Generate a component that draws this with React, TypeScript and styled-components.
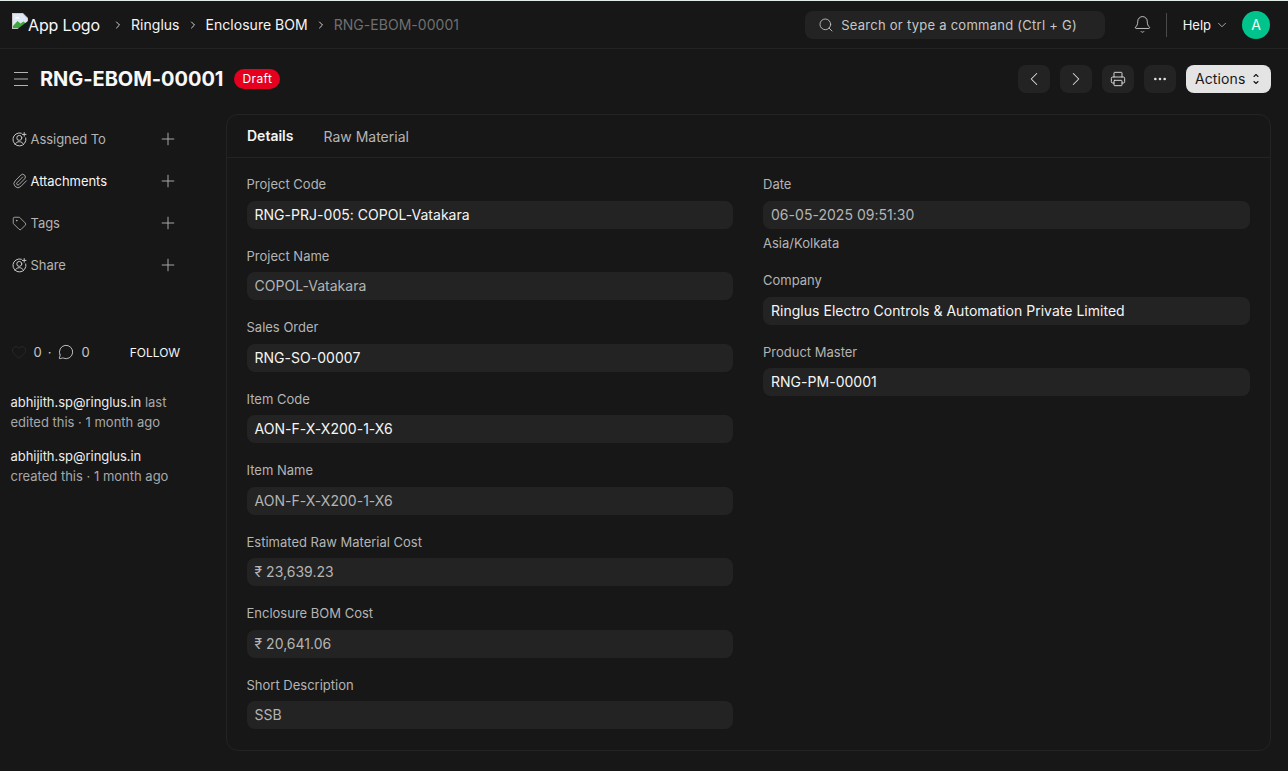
import React from 'react';
import styled, {createGlobalStyle} from 'styled-components';
import {Bell, ChevronDown, ChevronLeft, ChevronRight, Ellipsis, Heart, MessageCircle, Paperclip, Plus, Printer, Search, Tag} from 'lucide-react';

const GlobalStyle = createGlobalStyle`
  html, body {
    margin: 0;
    background: #171717;
    color: #f8f8f8;
    font-family: Inter, "Noto Sans", sans-serif;
    font-size: 14px;
  }
  * { box-sizing: border-box; }
`;

const Page = styled.div`
  height: 771px;
  overflow: hidden;
  border-top: 1px solid #e2ece6;
`;

const Navbar = styled.header`
  display: flex;
  align-items: center;
  height: 48px;
  padding: 0 18px 0 12px;
  border-bottom: 1px solid #232323;
`;

const Logo = styled.div`
  display: flex;
  align-items: flex-start;
  width: 93px;
  height: 24px;
  font-size: 16px;
  line-height: 25px;
  letter-spacing: -0.15px;
  white-space: nowrap;
  color: #f8f8f8;
`;

const BrokenImage = styled.svg`
  flex: none;
  width: 16px;
  height: 16px;
`;

const Crumbs = styled.nav`
  display: flex;
  align-items: center;
  flex: 1;
  font-size: 14px;
  color: #f8f8f8;
`;

const CrumbSep = styled(ChevronRight)`
  width: 12px;
  height: 12px;
  margin: 0 7px;
  color: #e8e8e8;
`;

const Crumb = styled.span<{$current?: boolean}>`
  letter-spacing: 0.03px;
  color: ${props => (props.$current ? '#6f6f6f' : '#f5f5f5')};
`;

const SearchBox = styled.div`
  display: flex;
  align-items: center;
  gap: 7.5px;
  width: 300px;
  height: 28px;
  padding: 0 13px;
  border-radius: 8px;
  background: #232323;
  color: #c7c7c7;
  font-size: 13px;
  letter-spacing: 0.26px;
  margin-right: 28px;
`;

const BellButton = styled.span`
  display: flex;
  color: #d8d8d8;
`;

const NavDivider = styled.span`
  width: 1px;
  height: 24px;
  margin: 0 16px 0 14px;
  background: #4a4a4a;
`;

const Help = styled.span`
  display: flex;
  align-items: center;
  gap: 4px;
  font-size: 13px;
  color: #f5f5f5;
  margin-right: 13px;
`;

const Avatar = styled.span`
  display: flex;
  align-items: center;
  justify-content: center;
  width: 28px;
  height: 28px;
  border-radius: 50%;
  background: #00c48c;
  color: #e8fff6;
  font-size: 14px;
`;

const PageHead = styled.div`
  display: flex;
  align-items: center;
  height: 65px;
  padding: 0 17px 5px 14px;
`;

const MenuIcon = styled.svg`
  flex: none;
  width: 14px;
  height: 16px;
  margin-right: 12px;
  color: #b4b4b4;
`;

const Title = styled.h1`
  margin: 0 11px 0 0;
  font-size: 20px;
  font-weight: 700;
  line-height: 28px;
  letter-spacing: -0.05px;
  color: #f8f8f8;
`;

const Badge = styled.span`
  height: 20px;
  padding: 0 8px;
  border-radius: 10px;
  background: #e6001f;
  color: #fff;
  font-size: 12px;
  line-height: 20px;
  letter-spacing: 0.4px;
`;

const HeadActions = styled.div`
  display: flex;
  align-items: center;
  gap: 10px;
  margin-left: auto;
`;

const IconButton = styled.button`
  display: flex;
  align-items: center;
  justify-content: center;
  width: 32px;
  height: 28px;
  padding: 0;
  border: 0;
  border-radius: 8px;
  background: #232323;
  color: #e0e0e0;
`;

const ActionsButton = styled.button`
  display: flex;
  align-items: center;
  gap: 8px;
  width: 85px;
  height: 28px;
  padding: 0 0 1px 9px;
  border: 0;
  border-radius: 8px;
  background: #e4e4e4;
  color: #171717;
  font-family: inherit;
  font-size: 14px;
  letter-spacing: 0.1px;
`;

const UpDownIcon = styled.svg`
  flex: none;
  width: 6px;
  height: 12px;
`;

const Layout = styled.main`
  display: flex;
  align-items: flex-start;
`;

const Sidebar = styled.aside`
  width: 226px;
  flex: none;
  padding: 4px 10.5px 0;
`;

const SideRow = styled.div<{$active?: boolean}>`
  display: flex;
  align-items: center;
  height: 42px;
  padding-right: 37.5px;
  font-size: 13px;
  color: ${props => (props.$active ? '#f5f5f5' : '#b4b4b4')};
`;

const SideLabel = styled.span`
  flex: 1;
  margin-left: 3px;
  letter-spacing: -0.05px;
`;

const SideIcon = styled.span`
  display: flex;
  justify-content: center;
  width: 16px;
  margin-left: 1px;
  color: #c7c7c7;
`;

const PersonIcon = styled.svg`
  width: 15px;
  height: 15px;
`;

const PlusIcon = styled(Plus)`
  width: 20px;
  height: 20px;
  color: #b4b4b4;
`;

const Stats = styled.div`
  display: flex;
  align-items: center;
  margin-top: 56px;
  height: 20px;
  font-size: 13px;
  color: #c7c7c7;
`;

const Count = styled.span`
  margin-left: 7px;
`;

const Dot = styled.span`
  margin: 0 7px 0 6px;
`;

const Follow = styled.span`
  margin-left: 40px;
  font-size: 12px;
  color: #f5f5f5;
`;

const Activity = styled.div`
  margin-top: 30px;
  font-size: 13px;
  line-height: 20px;
  color: #a8a8a8;
  & + & {
    margin-top: 14px;
  }
`;

const Owner = styled.span`
  letter-spacing: -0.04px;
  color: #ededed;
`;

const Card = styled.section`
  width: 1045px;
  height: 637px;
  border: 1px solid #232323;
  border-radius: 12px;
`;

const Tabs = styled.div`
  display: flex;
  gap: 30px;
  height: 43px;
  padding: 0 20px;
  border-bottom: 1px solid #232323;
`;

const TabItem = styled.span<{$active?: boolean}>`
  font-size: 14px;
  line-height: ${props => (props.$active ? 42 : 43)}px;
  font-weight: ${props => (props.$active ? 600 : 400)};
  color: ${props => (props.$active ? '#f5f5f5' : '#b4b4b4')};
`;

const FormGrid = styled.div`
  display: grid;
  grid-template-columns: 486.5px 486.5px;
  column-gap: 30px;
  padding: 16.6px 19.5px 0;
`;

const Column = styled.div`
  display: flex;
  flex-direction: column;
`;

const Field = styled.div`
  height: 71.5px;
`;

const FieldLabel = styled.div`
  height: 26px;
  padding-top: 0.6px;
  font-size: 13px;
  line-height: 18px;
  color: #b4b4b4;
`;

const Control = styled.div<{$muted?: boolean}>`
  height: 28px;
  padding: 0 8px;
  border-radius: 8px;
  background: #232323;
  font-size: 14px;
  line-height: 28px;
  letter-spacing: 0.025px;
  color: ${props => (props.$muted ? '#b4b4b4' : '#f5f5f5')};
`;

const Hint = styled.div`
  margin-top: 6px;
  font-size: 13px;
  line-height: 16px;
  color: #b4b4b4;
`;

const DateField = styled.div`
  height: 96px;
`;

const leftFields: [string, string, boolean][] = [
  ['Project Code', 'RNG-PRJ-005: COPOL-Vatakara', false],
  ['Project Name', 'COPOL-Vatakara', true],
  ['Sales Order', 'RNG-SO-00007', false],
  ['Item Code', 'AON-F-X-X200-1-X6', false],
  ['Item Name', 'AON-F-X-X200-1-X6', true],
  ['Estimated Raw Material Cost', '₹ 23,639.23', true],
  ['Enclosure BOM Cost', '₹ 20,641.06', true],
  ['Short Description', 'SSB', true],
];

function Person() {
  return (
    <PersonIcon viewBox="0 0 15 15" fill="none" stroke="currentColor" strokeWidth="1" strokeLinecap="round">
      <path d="M9.4 1.2A6.5 6.5 0 1 0 13.8 5.9" />
      <circle cx="7.3" cy="5.9" r="2.5" />
      <path d="M3 12.6c.8-2 2.4-2.9 4.3-2.9s3.5.9 4.3 2.9" />
      <path d="M12.2 .6v3.6M10.4 2.4h3.6" />
    </PersonIcon>
  );
}

const sideRows = [
  {label: 'Assigned To', icon: <Person />},
  {label: 'Attachments', icon: <Paperclip size={16} strokeWidth={1.2} />, active: true},
  {label: 'Tags', icon: <Tag size={15} strokeWidth={1.2} />},
  {label: 'Share', icon: <Person />},
];

function App() {
  return (
    <Page>
      <GlobalStyle />
      <Navbar>
        <Logo>
          <BrokenImage viewBox="0 0 16 16">
            <path d="M0 0h11l5 5v11H0z" fill="#c9c9c9" />
            <path d="M1 1h9.5L15 5.5V15H1z" fill="#dfe7f6" />
            <path d="M1 13l4.5-5 3 2.5 3-2 3.5 3V15H1z" fill="#3fa53f" />
            <path d="M3 5.5c.6-1.8 3.4-2 4.4 0z" fill="#fff" />
            <path d="M16 8L5.5 16H16z" fill="#171717" />
          </BrokenImage>
          App Logo
        </Logo>
        <Crumbs>
          <CrumbSep strokeWidth={1.8} />
          <Crumb>Ringlus</Crumb>
          <CrumbSep strokeWidth={1.8} />
          <Crumb>Enclosure BOM</Crumb>
          <CrumbSep strokeWidth={1.8} />
          <Crumb $current>RNG-EBOM-00001</Crumb>
        </Crumbs>
        <SearchBox>
          <Search size={16} strokeWidth={1.3} />
          Search or type a command (Ctrl + G)
        </SearchBox>
        <BellButton>
          <Bell size={19} strokeWidth={1.1} />
        </BellButton>
        <NavDivider />
        <Help>
          Help
          <ChevronDown size={14} strokeWidth={1.1} />
        </Help>
        <Avatar>A</Avatar>
      </Navbar>
      <PageHead>
        <MenuIcon viewBox="0 0 14 16" stroke="currentColor" strokeWidth="1.2">
          <path d="M0 1.5h14M0 8h14M0 14.5h14" />
        </MenuIcon>
        <Title>RNG-EBOM-00001</Title>
        <Badge>Draft</Badge>
        <HeadActions>
          <IconButton>
            <ChevronLeft size={22} strokeWidth={1.1} />
          </IconButton>
          <IconButton>
            <ChevronRight size={22} strokeWidth={1.1} />
          </IconButton>
          <IconButton>
            <Printer size={16} strokeWidth={1.4} />
          </IconButton>
          <IconButton>
            <Ellipsis size={16} strokeWidth={2} />
          </IconButton>
          <ActionsButton>
            Actions
            <UpDownIcon viewBox="0 0 6 12" fill="none" stroke="#171717" strokeWidth="1.1" strokeLinecap="round" strokeLinejoin="round">
              <path d="M1 3.5L3 1.5l2 2M1 8.5l2 2 2-2" />
            </UpDownIcon>
          </ActionsButton>
        </HeadActions>
      </PageHead>
      <Layout>
        <Sidebar>
          {sideRows.map(row => (
            <SideRow key={row.label} $active={row.active}>
              <SideIcon>{row.icon}</SideIcon>
              <SideLabel>{row.label}</SideLabel>
              <PlusIcon strokeWidth={1.1} />
            </SideRow>
          ))}
          <Stats>
            <Heart size={16} strokeWidth={1} color="#2f2f2f" />
            <Count>0</Count>
            <Dot>·</Dot>
            <MessageCircle size={16} strokeWidth={1.4} />
            <Count>0</Count>
            <Follow>FOLLOW</Follow>
          </Stats>
          <Activity>
            <Owner>abhijith.sp@ringlus.in</Owner> last
            <br />
            edited this · 1 month ago
          </Activity>
          <Activity>
            <Owner>abhijith.sp@ringlus.in</Owner>
            <br />
            created this · 1 month ago
          </Activity>
        </Sidebar>
        <Card>
          <Tabs>
            <TabItem $active>Details</TabItem>
            <TabItem>Raw Material</TabItem>
          </Tabs>
          <FormGrid>
            <Column>
              {leftFields.map(([label, value, muted]) => (
                <Field key={label}>
                  <FieldLabel>{label}</FieldLabel>
                  <Control $muted={muted}>{value}</Control>
                </Field>
              ))}
            </Column>
            <Column>
              <DateField>
                <FieldLabel>Date</FieldLabel>
                <Control $muted>06-05-2025 09:51:30</Control>
                <Hint>Asia/Kolkata</Hint>
              </DateField>
              <Field>
                <FieldLabel>Company</FieldLabel>
                <Control>Ringlus Electro Controls &amp; Automation Private Limited</Control>
              </Field>
              <Field>
                <FieldLabel>Product Master</FieldLabel>
                <Control>RNG-PM-00001</Control>
              </Field>
            </Column>
          </FormGrid>
        </Card>
      </Layout>
    </Page>
  );
}

export default App;
